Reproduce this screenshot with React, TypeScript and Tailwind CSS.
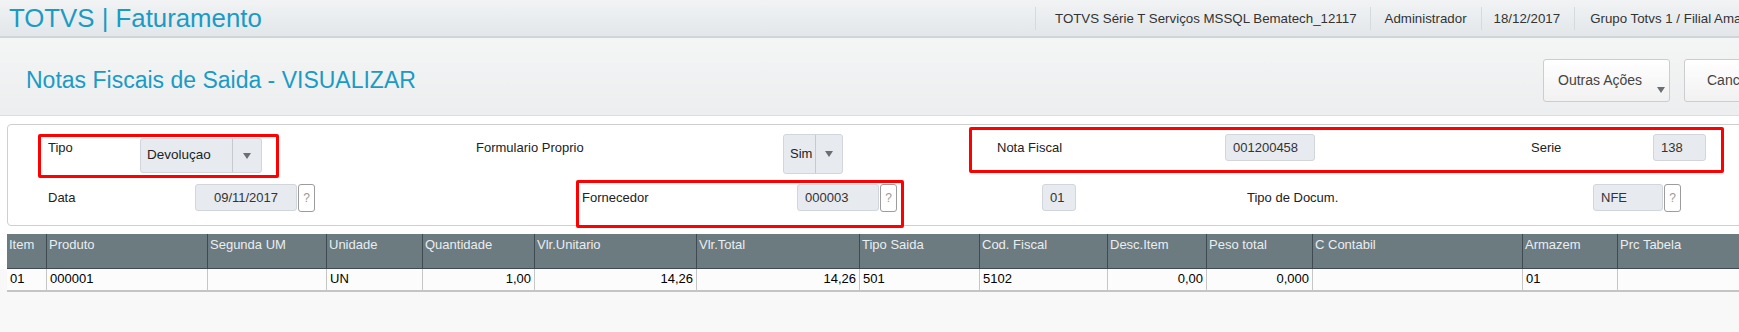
import React from 'react';

const font = "font-['Liberation_Sans',Arial,sans-serif]";

interface Column {
  label: string;
  width: string;
  value: string;
  right?: boolean;
}

const columns: Column[] = [
  { label: 'Item', width: 'w-[39px]', value: '01' },
  { label: 'Produto', width: 'w-[161px]', value: '000001' },
  { label: 'Segunda UM', width: 'w-[119px]', value: '' },
  { label: 'Unidade', width: 'w-[96px]', value: 'UN' },
  { label: 'Quantidade', width: 'w-[112px]', value: '1,00', right: true },
  { label: 'Vlr.Unitario', width: 'w-[162px]', value: '14,26', right: true },
  { label: 'Vlr.Total', width: 'w-[163px]', value: '14,26', right: true },
  { label: 'Tipo Saida', width: 'w-[120px]', value: '501' },
  { label: 'Cod. Fiscal', width: 'w-[128px]', value: '5102' },
  { label: 'Desc.Item', width: 'w-[99px]', value: '0,00', right: true },
  { label: 'Peso total', width: 'w-[106px]', value: '0,000', right: true },
  { label: 'C Contabil', width: 'w-[210px]', value: '' },
  { label: 'Armazem', width: 'w-[95px]', value: '01' },
  { label: 'Prc Tabela', width: 'w-[220px]', value: '' },
];

const Caret = () => (
  <svg width="8" height="6" viewBox="0 0 8 6">
    <path d="M0 0 L8 0 L4 6 Z" fill="#6b6e72" />
  </svg>
);

// campo somente leitura
const Field = ({ value, className, center }: { value: string; className: string; center?: boolean }) => (
  <div
    className={`${className} shrink-0 h-[27px] flex items-center rounded-[3px] border border-[#d2d6dc] bg-[#e7eaef] text-[13px] text-[#333] ${
      center ? 'justify-center' : 'pl-[7px]'
    }`}
  >
    {value}
  </div>
);

const Help = () => (
  <div className="ml-[1px] w-[17px] h-[28px] shrink-0 flex items-center justify-center rounded-[3px] border border-[#9c9c9c] bg-white text-[12px] text-[#9a9a9a]">
    ?
  </div>
);

const Label = ({ text, className }: { text: string; className: string }) => (
  <div className={`${className} shrink-0 text-[13px] leading-[16px] text-[#222] whitespace-nowrap`}>{text}</div>
);

export default function App() {
  return (
    <div className={`w-full h-[332px] overflow-hidden bg-white ${font}`}>
      {/* Topo */}
      <div className="h-[38px] flex items-start border-b-2 border-[#cfd5d9] bg-gradient-to-b from-[#f1f3f4] to-[#e3e7ea] whitespace-nowrap">
        <div className="w-[1035px] shrink-0 pl-[9px] pt-[4px] text-[25.8px] leading-[29px] text-[#1a9bc6]">
          TOTVS | Faturamento
        </div>
        <div className="flex mt-[7px] text-[13.3px] text-[#333]">
          <div className="h-[23px] flex items-center border-l border-[#d6dadd] pl-[19px] pr-[13px]">
            TOTVS Série T Serviços MSSQL Bematech_12117
          </div>
          <div className="h-[23px] flex items-center border-l border-[#d6dadd] px-[14px]">Administrador</div>
          <div className="h-[23px] flex items-center border-l border-[#d6dadd] pl-[12px] pr-[14px]">18/12/2017</div>
          <div className="h-[23px] flex items-center border-l border-[#d6dadd] pl-[15px]">
            Grupo Totvs 1 / Filial Amarela
          </div>
        </div>
      </div>

      {/* Titulo da rotina */}
      <div className="h-[78px] flex items-start border-b border-[#dcdcdc] bg-gradient-to-b from-[#f4f5f5] to-[#eceeef] whitespace-nowrap">
        <div className="w-[1543px] shrink-0 pl-[26px] pt-[29px] text-[23px] leading-[27px] text-[#1a9bc6]">
          Notas Fiscais de Saida - VISUALIZAR
        </div>
        <button className="relative w-[127px] h-[43px] mt-[21px] shrink-0 flex items-start pt-[12px] pl-[14px] rounded-[3px] border border-[#cdcdcd] bg-gradient-to-b from-white to-[#f1f1f1] text-[14px] leading-[17px] text-[#444]">
          Outras Ações
          <span className="absolute right-[4px] bottom-[8px]">
            <Caret />
          </span>
        </button>
        <button className="w-[110px] h-[43px] mt-[21px] ml-[14px] shrink-0 flex items-start pt-[12px] pl-[22px] rounded-[3px] border border-[#cdcdcd] bg-gradient-to-b from-white to-[#f1f1f1] text-[14px] leading-[17px] text-[#444]">
          Cancelar
        </button>
      </div>

      {/* Cabecalho da nota */}
      <div className="pt-[8px] flex">
        <div className="relative ml-[7px] w-[1760px] shrink-0 h-[102px] rounded-[4px] border border-[#cfcfcf] bg-white">
          <div className="h-[53px] flex items-start pl-[40px]">
            <Label text="Tipo" className="w-[92px] mt-[15px]" />
            <div className="w-[122px] h-[35px] mt-[13px] shrink-0 flex rounded-[3px] border border-[#d2d6dc] bg-[#e7eaef] text-[13.5px] text-[#222]">
              <div className="flex-1 flex items-center pl-[6px]">Devoluçao</div>
              <div className="w-[29px] flex items-center justify-center border-l border-[#c6cacf]">
                <Caret />
              </div>
            </div>
            <Label text="Formulario Proprio" className="ml-[214px] w-[307px] mt-[15px]" />
            <div className="w-[60px] h-[40px] mt-[9px] shrink-0 flex rounded-[3px] border border-[#d2d6dc] bg-[#e7eaef] text-[13px] text-[#222]">
              <div className="w-[31px] flex items-center pl-[6px]">Sim</div>
              <div className="flex-1 flex items-center justify-center border-l border-[#c6cacf]">
                <Caret />
              </div>
            </div>
            <Label text="Nota Fiscal" className="ml-[154px] w-[228px] mt-[15px]" />
            <Field value="001200458" className="w-[90px] mt-[9px]" />
            <Label text="Serie" className="ml-[216px] w-[122px] mt-[15px]" />
            <Field value="138" className="w-[53px] mt-[9px]" />
          </div>
          <div className="h-[47px] flex items-start pl-[40px]">
            <Label text="Data" className="w-[147px] mt-[12px]" />
            <div className="flex mt-[6px]">
              <Field value="09/11/2017" className="w-[102px]" center />
              <Help />
            </div>
            <Label text="Fornecedor" className="ml-[267px] w-[215px] mt-[12px]" />
            <div className="flex mt-[6px]">
              <Field value="000003" className="w-[82px]" />
              <Help />
            </div>
            <Field value="01" className="ml-[145px] w-[34px] mt-[6px]" />
            <Label text="Tipo de Docum." className="ml-[171px] w-[346px] mt-[12px]" />
            <div className="flex mt-[6px]">
              <Field value="NFE" className="w-[70px]" />
              <Help />
            </div>
          </div>

          {/* marcacoes em vermelho */}
          <div className="absolute left-[30px] top-[9px] w-[241px] h-[44px] border-[3px] border-[#ff0000] rounded-[2px]" />
          <div className="absolute left-[961px] top-[2px] w-[755px] h-[46px] border-[3px] border-[#ff0000] rounded-[2px]" />
          <div className="absolute left-[568px] top-[55px] w-[328px] h-[48px] border-[3px] border-[#ff0000] rounded-[2px]" />
        </div>
      </div>

      {/* Itens */}
      <div className="mt-[8px] h-[200px] bg-[#f8f8f8]">
        <div className="flex pl-[7px] bg-white">
          {columns.map((col, i) => (
            <div
              key={col.label}
              className={`${col.width} shrink-0 h-[35px] pl-[2px] pt-[3px] bg-[#6c7b80] border-b border-[#3f4b50] text-[13px] leading-[16px] text-[#e9eef0] whitespace-nowrap ${
                i > 0 ? 'border-l border-l-[#3f4b50]' : ''
              }`}
            >
              {col.label}
            </div>
          ))}
        </div>
        <div className="flex pl-[7px]">
          {columns.map((col, i) => (
            <div
              key={col.label}
              className={`${col.width} shrink-0 h-[23px] flex items-center pb-[2px] px-[3px] bg-[#fcfcfc] border-b-2 border-[#c4c4c4] text-[13px] leading-[16px] text-black ${
                col.right ? 'justify-end' : 'justify-start'
              } ${i > 0 ? 'border-l border-l-[#c6c6c6]' : ''}`}
            >
              {col.value}
            </div>
          ))}
        </div>
      </div>
    </div>
  );
}
